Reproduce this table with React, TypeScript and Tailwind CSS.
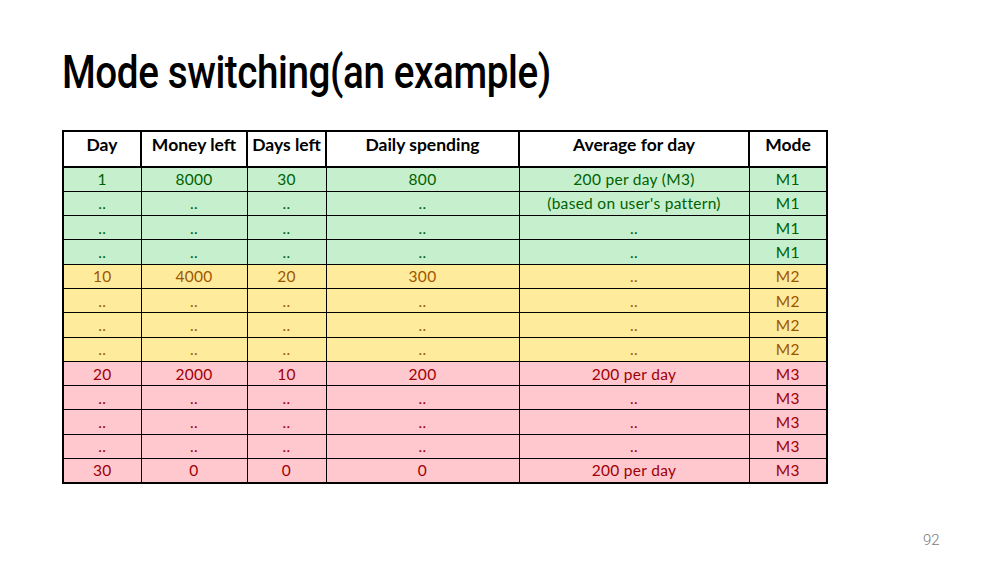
type Tone = "green" | "yellow" | "red";

type Row = {
  tone: Tone;
  cells: [string, string, string, string, string, string];
};

const HEADERS = ["Day", "Money left", "Days left", "Daily spending", "Average for day", "Mode"];
const WIDTHS = ["w-[78px]", "w-[106px]", "w-[79px]", "w-[193px]", "w-[230px]", "w-[78px]"];

const ROWS: Row[] = [
  { tone: "green", cells: ["1", "8000", "30", "800", "200 per day (M3)", "M1"] },
  { tone: "green", cells: ["..", "..", "..", "..", "(based on user's pattern)", "M1"] },
  { tone: "green", cells: ["..", "..", "..", "..", "..", "M1"] },
  { tone: "green", cells: ["..", "..", "..", "..", "..", "M1"] },
  { tone: "yellow", cells: ["10", "4000", "20", "300", "..", "M2"] },
  { tone: "yellow", cells: ["..", "..", "..", "..", "..", "M2"] },
  { tone: "yellow", cells: ["..", "..", "..", "..", "..", "M2"] },
  { tone: "yellow", cells: ["..", "..", "..", "..", "..", "M2"] },
  { tone: "red", cells: ["20", "2000", "10", "200", "200 per day", "M3"] },
  { tone: "red", cells: ["..", "..", "..", "..", "..", "M3"] },
  { tone: "red", cells: ["..", "..", "..", "..", "..", "M3"] },
  { tone: "red", cells: ["..", "..", "..", "..", "..", "M3"] },
  { tone: "red", cells: ["30", "0", "0", "0", "200 per day", "M3"] },
];

const TONE_CLASS: Record<Tone, string> = {
  green: "bg-[#c6efce] text-[#006100]",
  yellow: "bg-[#ffeb9c] text-[#9c5700]",
  red: "bg-[#ffc7ce] text-[#9c0006]",
};

export default function App() {
  return (
    <div className="relative h-[563px] w-[1000px] overflow-hidden bg-white">
      <div className="px-[62px] pt-[45px]">
        <h1 className="origin-left scale-x-[0.84] whitespace-nowrap font-['Roboto',sans-serif] text-[46px] font-medium leading-[54px] tracking-[-0.5px] text-black">
          Mode switching(an example)
        </h1>

        <table className="mt-[31px] border-collapse border-2 border-black font-['Lato',sans-serif]">
          <thead>
            <tr className="h-[36px] bg-white">
              {HEADERS.map((h, i) => (
                <th
                  key={h}
                  className={`${WIDTHS[i]} border-2 border-black p-0 pb-[7px] text-center text-[17.5px] font-bold text-black`}
                >
                  {h}
                </th>
              ))}
            </tr>
          </thead>
          <tbody>
            {ROWS.map((row, r) => (
              <tr key={r} className={`h-[24.3px] ${TONE_CLASS[row.tone]}`}>
                {row.cells.map((c, i) => (
                  <td
                    key={i}
                    className="border-[1.5px] border-black p-0 text-center text-[15.5px] leading-[20px] tracking-[0.3px]"
                  >
                    {c}
                  </td>
                ))}
              </tr>
            ))}
          </tbody>
        </table>
      </div>

      <div className="absolute left-[923px] top-[529px] font-['Roboto',sans-serif] text-[15px] font-light text-[#7a7a7a]">
        92
      </div>
    </div>
  );
}
